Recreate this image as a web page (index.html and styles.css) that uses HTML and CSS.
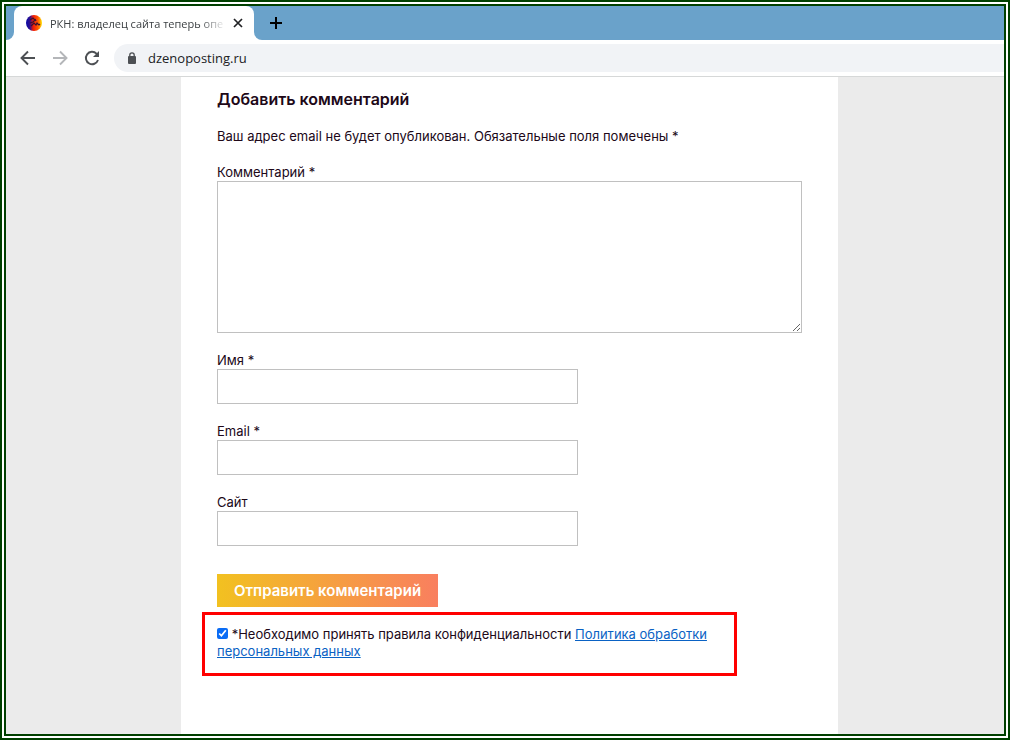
FILE: index.html
```
<!DOCTYPE html>
<html lang="ru">

<head>
    <meta charset="UTF-8" />
    <meta name="viewport" content="width=device-width, initial-scale=1" />
    <title>dzenoposting.ru</title>
    <link rel="stylesheet" href="styles.css">
</head>

<body>
    <header class="browser">
        <div class="tab-strip">
            <div class="strip-edge"></div>
            <div class="tab-slot">
                <div class="tab">
                    <svg class="favicon" width="16" height="16" viewBox="0 0 16 16" aria-hidden="true">
                        <defs>
                            <linearGradient id="fav">
                                <stop offset="0" stop-color="#0808a8" />
                                <stop offset="0.25" stop-color="#30108c" />
                                <stop offset="0.45" stop-color="#f01808" />
                                <stop offset="0.75" stop-color="#ff5a00" />
                                <stop offset="1" stop-color="#ffe600" />
                            </linearGradient>
                        </defs>
                        <circle cx="8" cy="8" r="8" fill="url(#fav)" />
                        <path d="M4 5l3-2 2 2-2 2-3 1M5 11l3-3 2 2 1-2 2 2 1-1M9 4l1 2" fill="none" stroke="#3a1030" stroke-width="1.2" />
                    </svg>
                    <span class="tab-title">РКН: владелец сайта теперь опе</span>
                    <button class="tab-close" aria-label="Закрыть вкладку">
                        <svg width="10" height="10" viewBox="0 0 10 10"><path d="M1 1l8 8M9 1l-8 8" stroke="#202124" stroke-width="1.7" /></svg>
                    </button>
                </div>
            </div>
            <div class="strip-rest">
                <button class="new-tab" aria-label="Новая вкладка">
                    <svg width="12" height="12" viewBox="0 0 12 12"><path d="M6 0v12M0 6h12" stroke="#000" stroke-width="2" /></svg>
                </button>
            </div>
        </div>

        <div class="toolbar">
            <button class="nav-btn" aria-label="Назад">
                <svg width="16" height="16" viewBox="0 0 16 16"><path d="M15 8H2M8 1.5L1.5 8L8 14.5" fill="none" stroke="#4d5054" stroke-width="1.9" /></svg>
            </button>
            <button class="nav-btn" aria-label="Вперёд">
                <svg width="16" height="16" viewBox="0 0 16 16"><path d="M1 8h13M8 1.5L14.500 8L8 14.5" fill="none" stroke="#b4b6b9" stroke-width="1.9" /></svg>
            </button>
            <button class="nav-btn" aria-label="Обновить">
                <svg width="16" height="16" viewBox="0 0 16 16"><path d="M14 10A6.200 6.200 0 1 1 12.500 3.600L14 5" fill="none" stroke="#4d5054" stroke-width="1.9" /><path d="M15 1v6H9z" fill="#4d5054" /></svg>
            </button>
            <div class="address">
                <svg width="8" height="12" viewBox="0 0 8 12" aria-hidden="true"><path d="M1.8 5V3a2.2 2.2 0 0 1 4.4 0v2" fill="none" stroke="#4d5054" stroke-width="1.3" /><rect y="4" width="8" height="8" rx="1" fill="#4d5054" /></svg>
                <input type="text" value="dzenoposting.ru" aria-label="Адрес сайта">
            </div>
        </div>
    </header>

    <main class="page">
        <form class="comment-form">
            <h3>Добавить комментарий</h3>
            <p>Ваш адрес email не будет опубликован. Обязательные поля помечены *</p>

            <div class="field">
                <label for="comment">Комментарий *</label>
                <textarea id="comment"></textarea>
            </div>
            <div class="field">
                <label for="author">Имя *</label>
                <input type="text" id="author">
            </div>
            <div class="field">
                <label for="email">Email *</label>
                <input type="email" id="email">
            </div>
            <div class="field">
                <label for="url">Сайт</label>
                <input type="text" id="url">
            </div>

            <button type="submit" class="submit">Отправить комментарий</button>

            <div class="consent">
                <input type="checkbox" id="policy" checked>
                <label for="policy">*Необходимо принять правила конфиденциальности</label>
                <a href="#">Политика обработки персональных данных</a>
            </div>
        </form>
    </main>
</body>

</html>
```

FILE: styles.css
```
:root {
    --frame: #004000;
    --strip: #6aa2ca;
    --text: #200818;
    --line: #c0c0c0;
    --link: #0a62c4;
}

* {
    box-sizing: border-box;
}

body {
    margin: 0;
    min-height: 100vh;
    display: flex;
    flex-direction: column;
    border: 6px double var(--frame);
    background-color: #fff;
    color: var(--text);
    font-family: Inter, sans-serif;
    font-size: 13px;
    line-height: 17px;
}

button {
    border: none;
    padding: 0;
    background: none;
    font-family: inherit;
    cursor: pointer;
}

svg {
    display: block;
}

/* browser bar */
.tab-strip {
    display: flex;
    height: 34px;
    background-color: #fff;
}

.strip-edge {
    width: 8px;
    background-color: var(--strip);
    border-bottom-right-radius: 8px;
}

.tab-slot {
    display: flex;
    width: 240px;
    background: linear-gradient(var(--strip) 50%, #fff 50%);
}

.tab {
    flex: 1;
    display: flex;
    align-items: center;
    min-width: 0;
    padding: 0 8px 0 12px;
    background-color: #fff;
    border-radius: 8px 8px 0 0;
}

.favicon {
    flex: none;
}

.tab-title {
    flex: 1;
    margin: 0 4px 0 8px;
    white-space: nowrap;
    font-family: "Open Sans", sans-serif;
    font-size: 11px;
    color: #3c4043;
    -webkit-mask-image: linear-gradient(to right, #000 85%, transparent);
    mask-image: linear-gradient(to right, #000 85%, transparent);
}

.tab-close {
    padding: 3px;
}

.strip-rest {
    flex: 1;
    display: flex;
    align-items: center;
    padding-left: 16px;
    background-color: var(--strip);
    border-bottom-left-radius: 8px;
}

.toolbar {
    display: flex;
    align-items: center;
    height: 37px;
    padding-left: 14px;
    background-color: #fff;
    border-bottom: 1px solid #d6d8d8;
}

.nav-btn {
    margin-right: 16px;
}

.address {
    flex: 1;
    display: flex;
    align-items: center;
    gap: 12px;
    height: 28px;
    margin-left: -2px;
    padding-left: 14px;
    background-color: #f1f3f6;
    border-radius: 14px 0 0 14px;
}

.address input {
    flex: 1;
    border: none;
    outline: none;
    padding: 0;
    background: none;
    font-family: "Open Sans", sans-serif;
    font-size: 13px;
    color: #202124;
}

/* page */
.page {
    flex: 1;
    display: grid;
    grid-template-columns: minmax(0, 657px);
    justify-content: center;
    padding-left: 9px;
    background-color: #ebebeb;
}

.comment-form {
    padding: 12px 36px 48px;
    background-color: #fff;
}

.comment-form h3 {
    margin: 0 0 19px;
    font-size: 16px;
    line-height: 20px;
    font-weight: 600;
}

.comment-form p {
    margin: 0 0 19px;
}

.field {
    margin-bottom: 19px;
}

.field label {
    display: block;
}

.field input,
.field textarea {
    display: block;
    border: 1px solid var(--line);
    border-radius: 0;
    padding: 8px;
    background-color: #fff;
    font: inherit;
}

.field textarea {
    width: 100%;
    height: 152px;
}

.field input {
    width: 361px;
    max-width: 100%;
    height: 35px;
}

.submit {
    display: block;
    height: 33px;
    margin-top: 28px;
    padding: 0 17px;
    background: linear-gradient(to right, #f2c120, #f97f5f);
    color: #fff;
    font-size: 15px;
    font-weight: 600;
}

.consent {
    width: 535px;
    max-width: 100%;
    margin: 5px 0 0 -15px;
    padding: 11px 12px 13px;
    border: 3px solid #f00;
}

.consent input {
    width: 11px;
    height: 11px;
    margin: 0;
    accent-color: #0a6cf5;
}

.consent a {
    color: var(--link);
}
```
